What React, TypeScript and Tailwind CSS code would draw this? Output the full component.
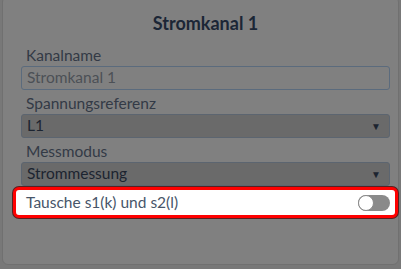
import React from "react";

function Field({ label, children }: { label: string; children: React.ReactNode }) {
  return (
    <div className="flex flex-col">
      <div className="h-[24px] flex items-end pb-[3px] pl-[5px] text-[15.5px] leading-none text-[#333a46]">{label}</div>
      {children}
    </div>
  );
}

function Select({ value }: { value: string }) {
  return (
    <div className="h-[24px] rounded-[3px] border border-[#5c6570] bg-[#6a6a6a] flex items-center justify-between pl-[5px] pr-[8px] text-[15.5px] text-[#1c2430]">
      <span>{value}</span>
      <span className="text-[10px] text-[#1c2430]">▼</span>
    </div>
  );
}

export default function App() {
  return (
    <div
      className="w-[401px] h-[269px] bg-[#787878] px-[2px] overflow-hidden"
      style={{ fontFamily: "Lato, 'Open Sans', sans-serif" }}
    >
      <div className="mt-[-4px] h-[269px] rounded-[6px] border border-[#707070] bg-[#808080] pl-[18px] pr-[8px]">
        <div className="h-[45px] flex items-center justify-center pt-[7px] text-[18px] font-bold text-[#1b2636]">
          Stromkanal 1
        </div>
        <div className="flex flex-col">
          <Field label="Kanalname">
            <div className="h-[24px] rounded-[3px] border border-[#5b6b7d] bg-[#808080] flex items-center pl-[5px] text-[15.5px] text-[#4c5056]">
              Stromkanal 1
            </div>
          </Field>
          <Field label="Spannungsreferenz">
            <Select value="L1" />
          </Field>
          <Field label="Messmodus">
            <Select value="Strommessung" />
          </Field>
          <div className="mt-[1px] mx-[-8px] h-[31px] rounded-[6px] border-[3px] border-[#ff0000] bg-white shadow-[0_0_0_1px_#5a2020] flex items-center justify-between pl-[10px] pr-[5px]">
            <span className="text-[15.5px] text-[#475569]">Tausche s1(k) und s2(l)</span>
            <div className="relative w-[32px] h-[16px] rounded-full bg-[#8a8a8a]">
              <div className="absolute left-0 top-0 w-[16px] h-[16px] rounded-full bg-white border border-[#8a8a8a]" />
            </div>
          </div>
        </div>
      </div>
    </div>
  );
}
